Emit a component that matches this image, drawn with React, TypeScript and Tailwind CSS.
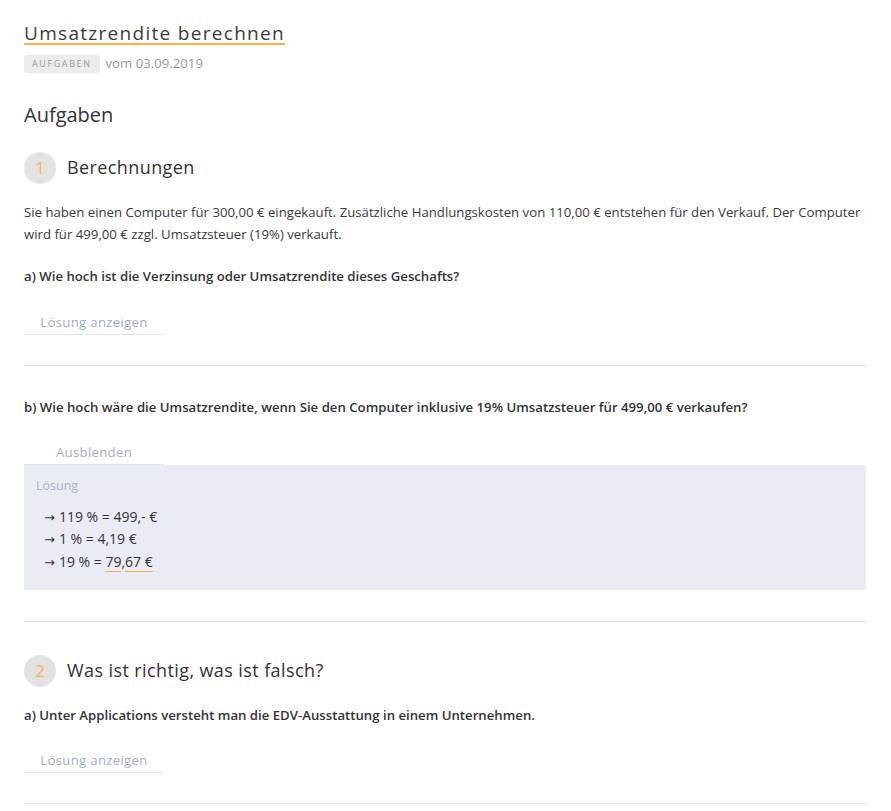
import React from "react";

const font = { fontFamily: '"Open Sans", "Noto Sans", sans-serif' };

function ShowButton({ label }: { label: string }) {
  return (
    <div className="w-[140px] border-b border-[#dfe3ec] text-center text-[13.2px] leading-[23px] tracking-[0.3px] text-[#a3afc4]">
      {label}
    </div>
  );
}

function Section({ n, title }: { n: number; title: string }) {
  return (
    <div className="flex items-center gap-[11px]">
      <div className="w-[32px] h-[32px] rounded-full bg-[#e2e2e2] flex items-center justify-center text-[17px] text-[#f7b255]">
        {n}
      </div>
      <div className="text-[18px] text-[#333] tracking-[0.4px]">{title}</div>
    </div>
  );
}

function Arrow() {
  return <span style={{ fontFamily: '"DejaVu Sans", sans-serif' }} className="text-[13px] mr-[4px]">→</span>;
}

export default function App() {
  return (
    <div style={font} className="bg-white min-h-[811px] pl-[24px] pr-[25px] pt-[22px] text-[#333]">
      <h1 className="text-[19px] leading-[20px] tracking-[1.3px] text-[#3b3b3b] inline-block border-b-2 border-[#f8b04a]">
        Umsatzrendite berechnen
      </h1>
      <div className="flex items-center gap-[6px] mt-[8px]">
        <span className="bg-[#ececec] rounded-[3px] px-[8px] h-[18px] flex items-center text-[9px] tracking-[1.6px] text-[#999]">
          AUFGABEN
        </span>
        <span className="text-[13.2px] text-[#999]">vom 03.09.2019</span>
      </div>

      <h2 className="text-[20px] text-[#333] mt-[27px] leading-[28px]">Aufgaben</h2>

      <div className="mt-[23px]">
        <Section n={1} title="Berechnungen" />
      </div>

      <p className="text-[13.2px] leading-[22px] mt-[17px] text-[#3a3a3a]">
        Sie haben einen Computer für 300,00 € eingekauft. Zusätzliche Handlungskosten von 110,00 € entstehen für den Verkauf. Der Computer wird für 499,00 € zzgl. Umsatzsteuer (19%) verkauft.
      </p>

      <p className="text-[13.2px] leading-[22px] font-semibold mt-[20px] text-[#333]">
        a) Wie hoch ist die Verzinsung oder Umsatzrendite dieses Geschafts?
      </p>

      <div className="mt-[24px]">
        <ShowButton label="Lösung anzeigen" />
      </div>

      <div className="border-t border-[#e4e4e4] mt-[30px]" />

      <p className="text-[13.2px] leading-[22px] font-semibold mt-[30px] text-[#333]">
        b) Wie hoch wäre die Umsatzrendite, wenn Sie den Computer inklusive 19% Umsatzsteuer für 499,00 € verkaufen?
      </p>

      <div className="mt-[23px]">
        <ShowButton label="Ausblenden" />
      </div>
      <div className="bg-[#e9ecf3] h-[125px] pl-[12px] pt-[12px]">
        <div className="text-[12.5px] text-[#a7b3c6]">Lösung</div>
        <div className="pl-[8px] mt-[10px] text-[14px] leading-[21.5px] text-[#333]">
          <div><Arrow />119 % = 499,- €</div>
          <div><Arrow />1 % = 4,19 €</div>
          <div>
            <Arrow />19 % = <span className="border-b border-[#f5a742]">79</span>,<span className="border-b border-[#f5a742]">67 €</span>
          </div>
        </div>
      </div>

      <div className="border-t border-[#e4e4e4] mt-[31px]" />

      <div className="mt-[33px]">
        <Section n={2} title="Was ist richtig, was ist falsch?" />
      </div>

      <p className="text-[13.2px] leading-[22px] font-semibold mt-[17px] text-[#333]">
        a) Unter Applications versteht man die EDV-Ausstattung in einem Unternehmen.
      </p>

      <div className="mt-[23px]">
        <ShowButton label="Lösung anzeigen" />
      </div>

      <div className="border-t border-[#e4e4e4] mt-[30px]" />
    </div>
  );
}
